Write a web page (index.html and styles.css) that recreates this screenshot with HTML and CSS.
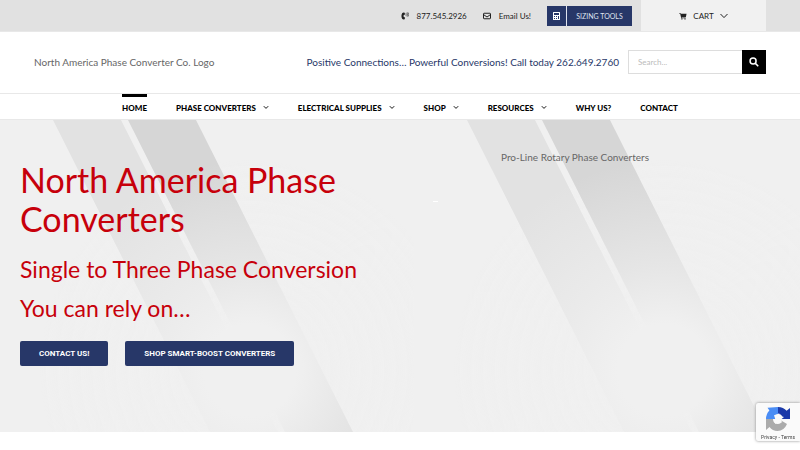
FILE: index.html
```
<!DOCTYPE html>
<html lang="en">
<head>
    <meta charset="UTF-8">
    <meta name="viewport" content="width=device-width, initial-scale=1.0">
    <title>North America Phase Converter Co.</title>
    <link rel="stylesheet" href="styles.css">
</head>
<body>

    <div class="top-bar">
        <a class="top-link phone" href="tel:8775452926">
            <svg class="icon" viewBox="0 0 16 16"><path d="M5 1 2.600 2C.3 6 .3 10 2.600 14L5 15l2.400-.5.7-3.500-2.600-.8c-.5-1.400-.5-3 0-4.400l2.600-.8-.7-3.500z"/><path d="M9.500 3q1.500 2 0 4M11.500 1.500q3 3.500 0 7M13.500.5q4 4.500 0 9" fill="none" stroke="currentColor" stroke-width="1.300"/></svg>
            877.545.2926
        </a>
        <a class="top-link email" href="#email">
            <svg class="icon" viewBox="0 0 16 16"><rect x="1" y="2.500" width="14" height="11" rx="1.200" fill="none" stroke="currentColor" stroke-width="2"/><path d="M1.500 5.500 8 10l6.500-4.500" fill="none" stroke="currentColor" stroke-width="2"/></svg>
            Email Us!
        </a>
        <a class="sizing" href="#sizing">
            <span class="sizing-icon">
                <svg class="icon-small" viewBox="0 0 14 16"><path fill-rule="evenodd" d="M1 0h12q1 0 1 1v14q0 1-1 1H1q-1 0-1-1V1q0-1 1-1zM2 2v4h10V2zM2 8v2h2V8zM6 8v2h2V8zM10 8v6h2V8zM2 12v2h2v-2zM6 12v2h2v-2z"/></svg>
            </span>
            <span class="sizing-label">SIZING TOOLS</span>
        </a>
        <a class="cart" href="#cart">
            <svg class="icon" viewBox="0 0 18 16"><path d="M0 1h3.500l.5 2h13l-1.500 7H6l.3 1.500H15V13H5L2.500 2.500H0z"/><circle cx="6.500" cy="14.500" r="1.500"/><circle cx="13.500" cy="14.500" r="1.500"/></svg>
            CART
            <svg class="cart-arrow" viewBox="0 0 8 6"><path d="M.5 1 4 4.600 7.500 1"/></svg>
        </a>
    </div>

    <header class="header">
        <a class="logo" href="#home">North America Phase Converter Co. Logo</a>
        <p class="tagline">Positive Connections… Powerful Conversions! Call today 262.649.2760</p>
        <form class="search">
            <input type="search" class="search-input" placeholder="Search..." aria-label="Search">
            <button type="submit" class="search-btn" aria-label="Search">
                <svg class="search-icon" viewBox="0 0 16 16"><circle cx="6.500" cy="6.500" r="4.800"/><path d="m10.200 10.200 4.600 4.600"/></svg>
            </button>
        </form>
    </header>

    <nav class="menu">
        <a class="menu-item active" href="#home">HOME</a>
        <a class="menu-item" href="#converters">PHASE CONVERTERS <svg class="arrow" viewBox="0 0 6 5"><path d="M.8 1.200 3 3.400l2.200-2.200"/></svg></a>
        <a class="menu-item" href="#electrical">ELECTRICAL SUPPLIES <svg class="arrow" viewBox="0 0 6 5"><path d="M.8 1.200 3 3.400l2.200-2.200"/></svg></a>
        <a class="menu-item" href="#shop">SHOP <svg class="arrow" viewBox="0 0 6 5"><path d="M.8 1.200 3 3.400l2.200-2.200"/></svg></a>
        <a class="menu-item" href="#resources">RESOURCES <svg class="arrow" viewBox="0 0 6 5"><path d="M.8 1.200 3 3.400l2.200-2.200"/></svg></a>
        <a class="menu-item" href="#why">WHY US?</a>
        <a class="menu-item" href="#contact">CONTACT</a>
    </nav>

    <main class="hero">
        <svg class="hero-bg" aria-hidden="true">
            <defs>
                <radialGradient id="fade" gradientUnits="userSpaceOnUse" cx="250" cy="250" r="210">
                    <stop offset="0" stop-color="#f0f0f0"/>
                    <stop offset=".22" stop-color="#f0f0f0"/>
                    <stop offset=".5" stop-color="#f0f0f0" stop-opacity=".6"/>
                    <stop offset="1" stop-color="#f0f0f0" stop-opacity="0"/>
                </radialGradient>
                <pattern id="stripes" patternUnits="userSpaceOnUse" width="414" height="314">
                    <path fill="#e2e2e2" d="M53 0h68l158 314h-68z"/>
                    <path fill="#d6d6d6" d="M128 0h68l158 314h-68z"/>
                    <path fill="url(#fade)" d="M0 0h414v314H0z"/>
                </pattern>
            </defs>
            <rect width="100%" height="100%" fill="url(#stripes)"/>
        </svg>
        <section class="hero-text">
            <h1>North America Phase Converters</h1>
            <h2>Single to Three Phase Conversion</h2>
            <h2>You can rely on…</h2>
            <div class="hero-buttons">
                <a class="btn" href="#contact">CONTACT US!</a>
                <a class="btn" href="#shop">SHOP SMART-BOOST CONVERTERS</a>
            </div>
        </section>
        <span class="dash"></span>
        <p class="hero-image">Pro-Line Rotary Phase Converters</p>
    </main>

    <aside class="recaptcha">
        <svg class="recaptcha-logo" viewBox="0 0 24 24">
            <path fill="#4a8df5" d="M12 0v7Q9 7.200 8.600 9L11 12H0Q0 7 3.400 3.500L1.500.8Z"/>
            <path fill="#1c3aa9" d="M12 0q5.500 0 8.600 3.800L24 1v11H13.500l3-2.600Q15 7 12 7z"/>
            <path fill="#ababab" d="M0 12h7q0 5 5 5 2.500 0 3.500-2l-2-2.500L21 17q-3 7-9.500 7-5 0-8-4L0 23z"/>
            <path fill="#fafafa" d="m8 8 3 .5L13 6l1 3 4 1-3 2.500 1 3-4-.5-3 2 .5-4z"/>
        </svg>
        <span class="recaptcha-text"><a href="#privacy">Privacy</a> - <a href="#terms">Terms</a></span>
    </aside>

</body>
</html>
```
FILE: styles.css
```
* {
    box-sizing: border-box;
}

body {
    margin: 0;
    font-family: Lato, "Noto Sans", sans-serif;
    font-size: 10px;
    color: #666;
    background: #fff;
}

a {
    color: inherit;
    text-decoration: none;
}

h1, h2, p {
    margin: 0;
    font-weight: normal;
}

/* Top bar */
.top-bar {
    display: flex;
    align-items: center;
    justify-content: flex-end;
    height: 31px;
    padding: 0 34px;
    background: #e1e1e1;
    color: #222;
    font-size: 8px;
}

.top-link {
    display: flex;
    align-items: center;
    gap: 8px;
    margin-right: 16px;
}

.icon {
    width: 8px;
    height: 8px;
    fill: currentColor;
}

.sizing {
    display: flex;
    width: 85px;
    height: 20px;
    margin-right: 9px;
    background: #273768;
    color: #dfe3ef;
    font-size: 7px;
}

.sizing-icon {
    display: flex;
    align-items: center;
    justify-content: center;
    width: 20px;
    border-right: 1px solid #dfe3ef;
}

.icon-small {
    width: 7px;
    height: 8px;
    fill: #fff;
}

.sizing-label {
    flex: 1;
    line-height: 20px;
    text-align: center;
}

.cart {
    display: flex;
    align-items: center;
    justify-content: center;
    gap: 6px;
    width: 125px;
    height: 31px;
    background: #f1f1f1;
}

.cart-arrow {
    width: 8px;
    height: 6px;
    fill: none;
    stroke: #222;
}

/* Logo row */
.header {
    display: flex;
    align-items: center;
    height: 63px;
    padding: 0 34px 1px;
    border-top: 1px solid #e8e8e8;
    border-bottom: 1px solid #e8e8e8;
    white-space: nowrap;
}

.logo {
    flex: 1;
}

.tagline {
    margin-right: 9px;
    color: #273768;
}

.search {
    display: flex;
    width: 138px;
    height: 24px;
}

.search-input {
    flex: 1;
    min-width: 0;
    padding: 0 9px;
    border: 1px solid #ddd;
    border-right: 0;
    border-radius: 0;
    background: #fff;
    font-family: inherit;
    font-size: 8px;
    appearance: none;
}

.search-input::placeholder {
    color: #bbb;
}

.search-btn {
    display: flex;
    align-items: center;
    justify-content: center;
    width: 24px;
    padding: 0;
    border: 0;
    background: #000;
}

.search-icon {
    width: 10px;
    height: 10px;
    fill: none;
    stroke: #fff;
    stroke-width: 2.4;
}

/* Main menu */
.menu {
    display: flex;
    justify-content: center;
    gap: 29px;
    height: 26px;
    border-bottom: 1px solid #e8e8e8;
    color: #000;
    font-size: 8px;
    font-weight: 900;
    white-space: nowrap;
}

.menu-item {
    display: flex;
    align-items: center;
    gap: 7px;
    padding-top: 2px;
}

.active {
    box-shadow: inset 0 3px #000;
}

.arrow {
    width: 6px;
    height: 5px;
    fill: none;
    stroke: #111;
}

/* Hero */
.hero {
    position: relative;
    display: grid;
    grid-template-columns: 413px 68px 1fr;
    min-height: 312px;
    padding: 0 20px;
    background: #f0f0f0;
}

.hero-bg {
    position: absolute;
    top: 0;
    left: 0;
    width: 100%;
    height: 100%;
}

.hero-text, .hero-image, .dash {
    position: relative;
}

.hero-text {
    padding-top: 40px;
    color: #c7000b;
}

h1 {
    width: 350px;
    margin-bottom: 12px;
    font-size: 34px;
    line-height: 39px;
}

h2 {
    font-size: 23px;
    line-height: 39px;
}

.hero-buttons {
    display: flex;
    gap: 17px;
    margin-top: 13px;
}

.btn {
    padding: 0 19px;
    border-radius: 2px;
    background: #273768;
    color: #fff;
    font-family: Roboto, sans-serif;
    font-size: 8px;
    font-weight: bold;
    line-height: 25px;
}

.dash {
    width: 5px;
    height: 1px;
    margin-top: 81px;
    background: #fff;
}

.hero-image {
    padding-top: 30px;
    line-height: 14px;
}

/* Badge in the corner of the window */
.recaptcha {
    position: fixed;
    right: 0;
    bottom: 9px;
    display: flex;
    flex-direction: column;
    align-items: center;
    gap: 3px;
    width: 44px;
    height: 38px;
    padding-top: 4px;
    border-radius: 2px 0 0 2px;
    background: #fafafa;
    box-shadow: 0 0 3px #888;
    color: #444;
    font-family: Roboto, sans-serif;
    font-size: 5px;
    white-space: nowrap;
}

.recaptcha-logo {
    width: 24px;
    height: 24px;
}
```
